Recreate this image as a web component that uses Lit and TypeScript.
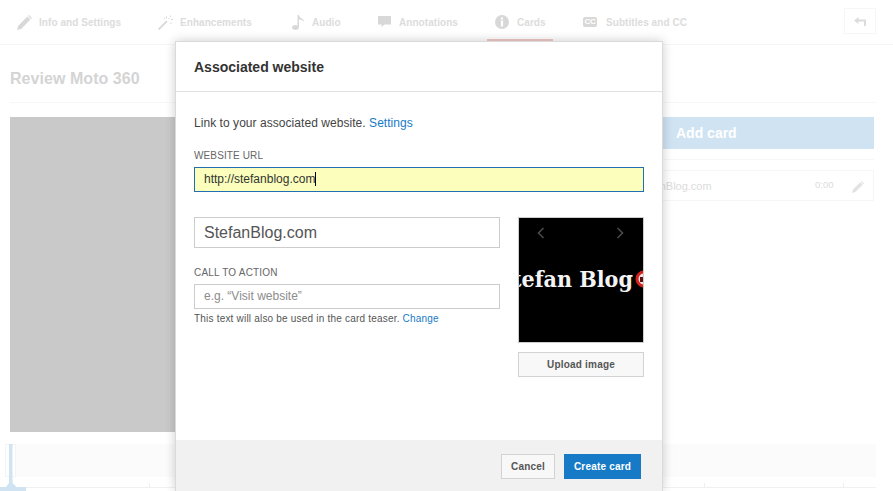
import { LitElement, html, css } from "lit";
import { customElement } from "lit/decorators.js";

const pencil = html`<svg viewBox="0 0 16 16"><path d="M0 16l1.2-4.300L11 1.600l3.300 3.300L4.400 14.800z"/><path d="M11.800.9l.9-.9L16 3.300l-.9.9z"/></svg>`;

@customElement("app-root")
export class AppRoot extends LitElement {
  static styles = css`
    :host { display: block; position: relative; width: 893px; height: 491px; overflow: hidden; background: #fff; font-family: "Liberation Sans", Arial, sans-serif; color: #333; }
    * { box-sizing: border-box; }
    .tabs { height: 45px; border-bottom: 1px solid #f6f6f6; display: flex; padding: 0 17px 0 17px; }
    .tab { display: flex; align-items: center; height: 44px; font-size: 10px; font-weight: bold; color: #dcdcdc; white-space: nowrap; letter-spacing: .06px; }
    .tab svg { fill: #d8d8d8; display: block; flex: none; }
    .t1 { width: 141px; } .t1 svg { width: 15px; height: 15px; margin-right: 7px; }
    .t2 { width: 134px; } .t2 svg { width: 15px; height: 15px; margin-right: 7px; }
    .t3 { width: 86px; } .t3 svg { width: 13px; height: 15px; margin-right: 7px; }
    .t4 { width: 109px; } .t4 svg { width: 13px; height: 11px; margin-right: 8px; margin-top: -2px; }
    .t5 { width: 66px; padding: 5px 0 0 8px; height: 41px; border-bottom: 2px solid #f0c8c8; }
    .t5 svg { width: 14px; height: 14px; margin-right: 8px; }
    .t6 { margin-left: 30px; }
    .cc { display: block; width: 14px; height: 10px; margin-right: 9px; border-radius: 2px; background: #d8d8d8; color: #fff; font-size: 8px; line-height: 10px; text-align: center; letter-spacing: -.3px; }
    .back { margin-left: auto; margin-top: 8px; width: 32px; height: 26px; border: 1px solid #f6f6f6; display: flex; align-items: center; justify-content: center; }
    .back svg { width: 12px; height: 9px; fill: #dcdcdc; }

    .main { padding: 0 17px 0 10px; }
    .title { height: 58px; border-bottom: 1px solid #f7f7f7; font-size: 16px; font-weight: bold; color: #d4d4d4; padding-top: 25px; line-height: 18px; letter-spacing: .05px; }
    .work { display: flex; margin-top: 14px; height: 315px; padding-right: 2px; }
    .video { width: 610px; background: #c9c9c9; flex: none; }
    .side { flex: 1; }
    .add { height: 32px; background: #d0e3f3; color: #fff; font-size: 14px; font-weight: bold; line-height: 32px; padding-left: 56px; }
    .sep { height: 1px; background: #f7f7f7; margin-top: 10px; }
    .row { margin-top: 10px; height: 31px; border: 1px solid #f6f6f6; font-size: 11px; color: #dcdcdc; line-height: 30px; display: flex; }
    .url { margin-left: 13px; width: 181px; white-space: nowrap; }
    .time { font-size: 9.5px; line-height: 28px; width: 37px; }
    .row svg { width: 12px; height: 12px; fill: #e2e2e2; margin-top: 10px; }
    .timeline { position: relative; margin-top: 12px; height: 44px; width: 866px; border-bottom: 1px solid #f0f0f0; }
    .track { height: 33px; margin-left: 5px; background: #fbfbfb; }
    .tick { position: absolute; bottom: 0; width: 1px; height: 4px; background: #eee; }
    .frame { position: absolute; left: -5px; top: 0; width: 11px; height: 33px; border: 1px solid #f4f4f4; }
    .play { position: absolute; left: -10px; top: 0; width: 26px; height: 47px; fill: #d0e3f3; }

    .modal { position: absolute; left: 175px; top: 41px; width: 488px; height: 450px; background: #fff; border: 1px solid #dadada; border-bottom: 0; box-shadow: 0 0 10px rgba(0,0,0,.2); display: flex; flex-direction: column; }
    .mh { height: 50px; border-bottom: 1px solid #e1e1e1; padding: 17px 0 0 18px; font-size: 14px; font-weight: bold; color: #333; line-height: 16px; flex: none; }
    .mb { flex: 1; padding: 24px 18px 0 18px; }
    .intro { font-size: 12px; line-height: 14px; color: #444; letter-spacing: .05px; }
    a { color: #167ac6; text-decoration: none; }
    .lbl { font-size: 10px; line-height: 12px; color: #666; letter-spacing: .12px; }
    .url-l { margin-top: 20px; }
    .urlbox { margin-top: 5px; height: 25px; width: 450px; border: 1px solid #1f6fb2; background: #fbffbb; font-size: 12px; line-height: 23px; padding-left: 9px; color: #333; display: flex; }
    .caret { width: 1px; height: 14px; background: #000; margin-top: 4px; }
    .cols { display: flex; justify-content: space-between; width: 450px; margin-top: 25px; }
    .left { width: 306px; }
    .big { height: 31px; border: 1px solid #ccc; font-size: 16px; line-height: 29px; padding-left: 9px; color: #555; }
    .cta-l { margin-top: 19px; letter-spacing: .2px; }
    .cta { margin-top: 5px; height: 25px; border: 1px solid #ccc; font-size: 12px; line-height: 23px; padding-left: 9px; color: #8c8c8c; }
    .help { margin-top: 3px; font-size: 10px; line-height: 14px; color: #555; letter-spacing: .2px; white-space: nowrap; }
    .right { width: 126px; }
    .thumb { width: 126px; height: 126px; background: #000; border: 1px solid #ccc; position: relative; overflow: hidden; }
    .brand { font-family: "DejaVu Serif", serif; font-stretch: condensed; font-weight: bold; font-size: 23px; color: #f4f4f4; white-space: nowrap; position: absolute; left: -7px; top: 47px; line-height: 28px; }
    .dot { position: absolute; left: 116px; top: 52px; width: 18px; height: 18px; }
    .nav { position: absolute; top: 9px; width: 8px; height: 12px; fill: none; stroke: #4a4a4a; stroke-width: 1.6; }
    .nav.l { left: 18px; } .nav.r { right: 19px; }
    .upload { margin-top: 9px; width: 126px; height: 25px; border: 1px solid #d3d3d3; background: #f8f8f8; font-size: 10px; font-weight: bold; line-height: 23px; text-align: center; color: #555; letter-spacing: .2px; }
    .mf { height: 51px; flex: none; background: #f1f1f1; display: flex; justify-content: flex-end; align-items: flex-start; gap: 9px; padding: 14px 21px 0 0; }
    .btn { height: 25px; font-size: 10px; font-weight: bold; line-height: 23px; text-align: center; letter-spacing: .2px; }
    .cancel { width: 54px; border: 1px solid #d3d3d3; background: #f8f8f8; color: #555; }
    .create { width: 77px; border: 1px solid #167ac6; background: #167ac6; color: #fff; }
  `;

  render() {
    return html`
      <div class="tabs">
        <div class="tab t1">${pencil}Info and Settings</div>
        <div class="tab t2"><svg viewBox="0 0 15 15"><path d="M0 13.800L8.300 5.500l1.300 1.300L1.300 15z"/><path d="M8 1.500h1v2H8zM12 .5h1v1.500h-1zM13 4h2v1h-2zM10.500 3h1v1h-1zM12.500 7.500h1v1.500h-1zM6 3h1v1H6z"/></svg>Enhancements</div>
        <div class="tab t3"><svg viewBox="0 0 13 15"><path d="M5.500 0h1.400c.2 1.700 1.300 2.600 2.800 3.400 1.600.9 2.500 2 2.800 3.600-1-1.300-3-2.200-5.600-2.400v7.700C6.900 13.900 5.500 15 3.500 15S0 14 0 12.500 1.500 10 3.500 10c.8 0 1.500.2 2 .5z"/></svg>Audio</div>
        <div class="tab t4"><svg viewBox="0 0 13 11"><path d="M0 0h13v8.500H6.500L3.500 11V8.500H0z"/></svg>Annotations</div>
        <div class="tab t5"><svg viewBox="0 0 14 14"><path fill-rule="evenodd" d="M7 0a7 7 0 1 1 0 14A7 7 0 0 1 7 0zM5.900 2.500v2h2.200v-2zM5.900 5.500v6h2.200v-6z"/></svg>Cards</div>
        <div class="tab t6"><span class="cc">CC</span>Subtitles and CC</div>
        <div class="back"><svg viewBox="0 0 12 9"><path d="M0 3.500L4.500 0v2.500H12V9h-2V4.500H4.500V7z"/></svg></div>
      </div>
      <div class="main">
        <div class="title">Review Moto 360</div>
        <div class="work">
          <div class="video"></div>
          <div class="side">
            <div class="add">Add card</div>
            <div class="sep"></div>
            <div class="row"><span class="url">StefanBlog.com</span><span class="time">0:00</span>${pencil}</div>
          </div>
        </div>
        <div class="timeline">
          <div class="track"></div>
          <div class="frame"></div>
          <svg class="play" viewBox="0 0 26 47"><path d="M9 0h3.500v39l4 4H26v4H0v-4h6l3-4z"/></svg>
          ${[139, 278, 417, 555, 694, 833].map((x) => html`<div class="tick" style="left:${x}px"></div>`)}
        </div>
      </div>

      <div class="modal">
        <div class="mh">Associated website</div>
        <div class="mb">
          <div class="intro">Link to your associated website. <a>Settings</a></div>
          <div class="lbl url-l">WEBSITE URL</div>
          <div class="urlbox">http://stefanblog.com<span class="caret"></span></div>
          <div class="cols">
            <div class="left">
              <div class="big">StefanBlog.com</div>
              <div class="lbl cta-l">CALL TO ACTION</div>
              <div class="cta">e.g. “Visit website”</div>
              <div class="help">This text will also be used in the card teaser. <a>Change</a></div>
            </div>
            <div class="right">
              <div class="thumb">
                <span class="brand">tefan Blog</span>
                <svg class="dot" viewBox="0 0 18 18"><circle cx="9" cy="9" r="8.500" fill="#d8201c"/><circle cx="9" cy="9" r="5.500" fill="#f0e0e0"/><path d="M5 7h8v5H5z" fill="#5a1010"/></svg>
                <svg class="nav l" viewBox="0 0 8 12"><path d="M6.500 1L1.500 6l5 5"/></svg>
                <svg class="nav r" viewBox="0 0 8 12"><path d="M1.500 1l5 5-5 5"/></svg>
              </div>
              <div class="upload">Upload image</div>
            </div>
          </div>
        </div>
        <div class="mf">
          <div class="btn cancel">Cancel</div>
          <div class="btn create">Create card</div>
        </div>
      </div>
    `;
  }
}
